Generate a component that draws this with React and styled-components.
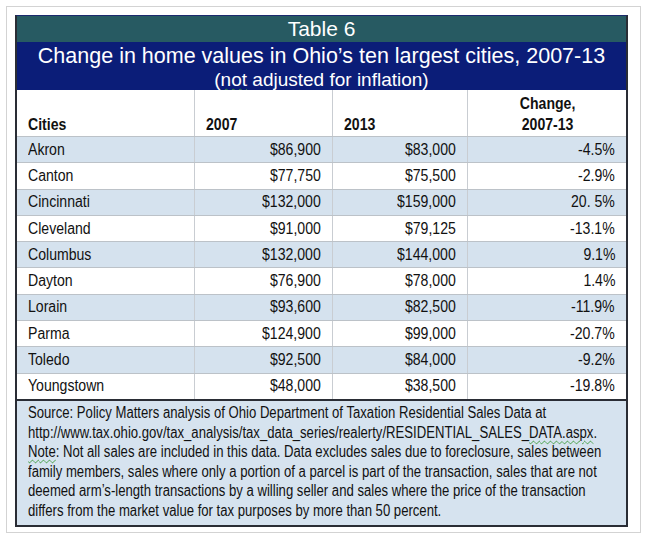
import React from "react";
import styled, { createGlobalStyle } from "styled-components";

const Global = createGlobalStyle`
  html, body { margin: 0; padding: 0; background: #ffffff; }
  body { font-family: "Liberation Sans", Arial, sans-serif; color: #111; }
`;

const Frame = styled.div`
  box-sizing: border-box;
  width: 635px;
  margin: 6px 0 0 6px;
  border: 1px solid #d3d3d3;
  padding: 8px 12px 5px 8px;
  background: #fff;
`;

const Table = styled.div`
  box-sizing: border-box;
  width: 613px;
  border: 2px solid #2a2d35;
  border-top: 1px solid #1c2a6e;
  display: flex;
  flex-direction: column;
  overflow: hidden;
`;

const Band = styled.div`
  background: #275a62;
  color: #fff;
  height: 26px;
  display: flex;
  align-items: center;
  justify-content: center;
  font-size: 21px;
  line-height: 26px;
`;

const TitleBlock = styled.div`
  background: #0b1d78;
  color: #fff;
  height: 48px;
  box-sizing: border-box;
  padding-top: 2px;
  display: flex;
  flex-direction: column;
  align-items: center;
`;

const Title = styled.div`
  font-size: 21.5px;
  line-height: 25px;
  white-space: nowrap;
`;

const Subtitle = styled.div`
  font-size: 19px;
  line-height: 21px;
  white-space: nowrap;
`;

const Squiggle = styled.span`
  text-decoration: underline wavy #3f9a3f;
  text-decoration-thickness: 1px;
  text-underline-offset: 2px;
`;

const Row = styled.div`
  display: grid;
  grid-template-columns: 177px 138px 135px 159px;
  box-sizing: border-box;
  height: ${(p) => p.$h}px;
  background: ${(p) => (p.$shaded ? "#d5e2ee" : "#ffffff")};
  border-bottom: ${(p) => (p.$last ? "2px solid #2a2d35" : "1px solid #bcc2c8")};
  font-size: 16px;
`;

const Cell = styled.div`
  box-sizing: border-box;
  display: flex;
  align-items: ${(p) => (p.$head ? "flex-end" : "center")};
  justify-content: ${(p) =>
    p.$align === "right" ? "flex-end" : p.$align === "center" ? "center" : "flex-start"};
  text-align: ${(p) => p.$align || "left"};
  padding: ${(p) => (p.$head ? "0 10px 1px 11px" : "0 11px 0 11px")};
  border-left: ${(p) => (p.$first ? "none" : "1px solid #c9cdd2")};
  font-weight: ${(p) => (p.$head ? "bold" : "normal")};
  line-height: ${(p) => (p.$head ? "21px" : "18px")};
  white-space: nowrap;
`;

const CellText = styled.span`
  display: inline-block;
  transform: scaleX(0.88);
  transform-origin: ${(p) => p.$origin || "left"} center;
`;

const Note = styled.div`
  background: #d6e3ef;
  padding: 2px 11px 4px 11px;
  font-size: 16px;
  line-height: 19.6px;
`;

const NoteLine = styled.div`
  white-space: nowrap;
  transform: scaleX(0.82);
  transform-origin: left center;
`;

const rows = [
  ["Akron", "$86,900", "$83,000", "-4.5%"],
  ["Canton", "$77,750", "$75,500", "-2.9%"],
  ["Cincinnati", "$132,000", "$159,000", "20. 5%"],
  ["Cleveland", "$91,000", "$79,125", "-13.1%"],
  ["Columbus", "$132,000", "$144,000", "9.1%"],
  ["Dayton", "$76,900", "$78,000", "1.4%"],
  ["Lorain", "$93,600", "$82,500", "-11.9%"],
  ["Parma", "$124,900", "$99,000", "-20.7%"],
  ["Toledo", "$92,500", "$84,000", "-9.2%"],
  ["Youngstown", "$48,000", "$38,500", "-19.8%"],
];

export default function App() {
  return (
    <>
      <Global />
      <Frame>
        <Table>
          <Band>Table 6</Band>
          <TitleBlock>
            <Title>Change in home values in Ohio’s ten largest cities, 2007-13</Title>
            <Subtitle>
              (<Squiggle>not</Squiggle> adjusted for inflation)
            </Subtitle>
          </TitleBlock>
          <Row $h={47}>
            <Cell $head $first><CellText>Cities</CellText></Cell>
            <Cell $head><CellText>2007</CellText></Cell>
            <Cell $head><CellText>2013</CellText></Cell>
            <Cell $head $align="center">
              <CellText $origin="center">
                Change,
                <br />
                2007-13
              </CellText>
            </Cell>
          </Row>
          {rows.map((r, i) => (
            <Row
              key={r[0]}
              $h={i === rows.length - 1 ? 27.3 : 26.3}
              $shaded={i % 2 === 0}
              $last={i === rows.length - 1}
            >
              <Cell $first><CellText>{r[0]}</CellText></Cell>
              <Cell $align="right"><CellText $origin="right">{r[1]}</CellText></Cell>
              <Cell $align="right"><CellText $origin="right">{r[2]}</CellText></Cell>
              <Cell $align="right"><CellText $origin="right">{r[3]}</CellText></Cell>
            </Row>
          ))}
          <Note>
            <NoteLine>
              Source: Policy Matters analysis of Ohio Department of Taxation Residential Sales Data at
            </NoteLine>
            <NoteLine>
              http://www.tax.ohio.gov/tax_analysis/tax_data_series/realerty/RESIDENTIAL_SALES_
              <Squiggle>DATA.aspx</Squiggle>.
            </NoteLine>
            <NoteLine>
              <Squiggle>Note</Squiggle>: Not all sales are included in this data. Data excludes sales due to foreclosure, sales between
            </NoteLine>
            <NoteLine>
              family members, sales where only a portion of a parcel is part of the transaction, sales that are not
            </NoteLine>
            <NoteLine>
              deemed arm’s-length transactions by a willing seller and sales where the price of the transaction
            </NoteLine>
            <NoteLine>
              differs from the market value for tax purposes by more than 50 percent.
            </NoteLine>
          </Note>
        </Table>
      </Frame>
    </>
  );
}
